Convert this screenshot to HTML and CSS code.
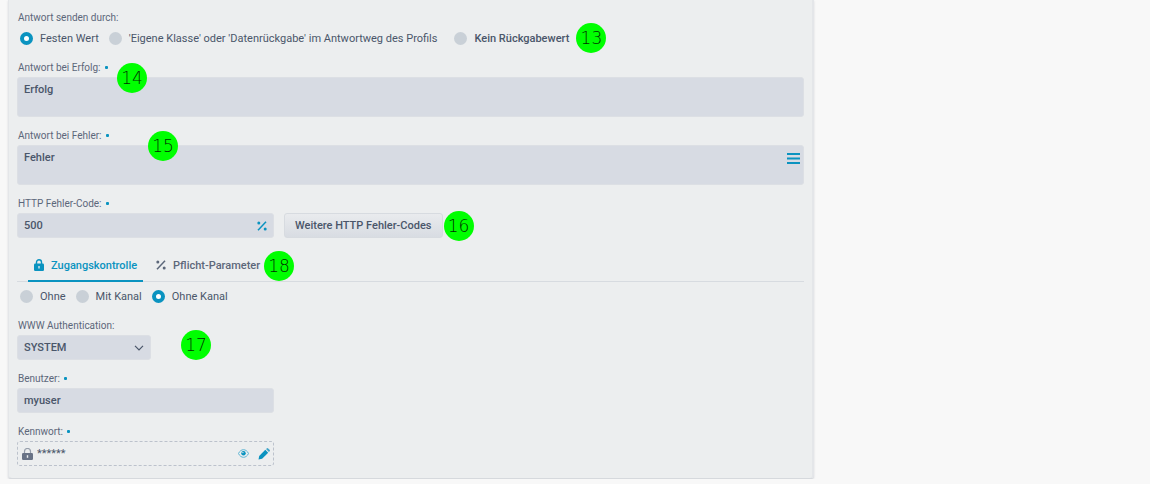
FILE: index.html
```html
<!DOCTYPE html>
<html lang="de">
  <head>
    <meta charset="UTF-8" />
    <title>HTTP Antwort</title>
    <link rel="stylesheet" href="styles.css">
  </head>
  <body>
    <form class="panel">
      <fieldset class="group">
        <legend class="label">Antwort senden durch:</legend>
        <div class="radios">
          <label><input type="radio" name="antwort" checked />Festen Wert</label>
          <label><input type="radio" name="antwort" />'Eigene Klasse' oder 'Datenrückgabe' im Antwortweg des Profils</label>
          <label class="none"><input type="radio" name="antwort" />Kein Rückgabewert</label>
          <span class="badge">13</span>
        </div>
      </fieldset>

      <div class="field">
        <label class="label required" for="erfolg">Antwort bei Erfolg:</label>
        <textarea class="box" id="erfolg">Erfolg</textarea>
        <span class="badge badge_success">14</span>
      </div>

      <div class="field">
        <label class="label required" for="fehler">Antwort bei Fehler:</label>
        <textarea class="box" id="fehler">Fehler</textarea>
        <button class="icon_btn menu" type="button" aria-label="Menü">
          <svg width="13" height="12" viewBox="0 0 13 12"><path d="M0 1h13M0 5.5h13M0 10h13" stroke="currentColor" stroke-width="1.8" /></svg>
        </button>
        <span class="badge badge_error">15</span>
      </div>

      <div class="field">
        <label class="label required" for="code">HTTP Fehler-Code:</label>
        <div class="row">
          <div class="short">
            <input class="box" id="code" type="text" value="500" />
            <button class="icon_btn percent" type="button" aria-label="Parameter">
              <svg width="10" height="10" viewBox="0 0 10 10"><path d="M1 9.2L9 .8" stroke="currentColor" stroke-width="1.5" /><circle cx="1.8" cy="2" r="1.5" fill="currentColor" /><circle cx="8.2" cy="8" r="1.5" fill="currentColor" /></svg>
            </button>
          </div>
          <button class="more" type="button">Weitere HTTP Fehler-Codes</button>
          <span class="badge badge_more">16</span>
        </div>
      </div>

      <div class="tabs">
        <button class="tab active" type="button">
          <svg width="10" height="12" viewBox="0 0 10 12"><path d="M2.5 5V3.3a2.5 2.5 0 0 1 5 0V5" fill="none" stroke="currentColor" stroke-width="1.4" /><rect y="4.6" width="10" height="7.4" rx="1.2" fill="currentColor" /><path d="M5 7v2.4" stroke="#eceeef" stroke-width="1.3" /></svg>
          Zugangskontrolle
        </button>
        <button class="tab" type="button">
          <svg width="10" height="10" viewBox="0 0 10 10"><path d="M1 9.2L9 .8" stroke="currentColor" stroke-width="1.5" /><circle cx="1.8" cy="2" r="1.5" fill="currentColor" /><circle cx="8.2" cy="8" r="1.5" fill="currentColor" /></svg>
          Pflicht-Parameter
        </button>
        <span class="badge">18</span>
      </div>

      <div class="radios access">
        <label><input type="radio" name="kanal" />Ohne</label>
        <label><input type="radio" name="kanal" />Mit Kanal</label>
        <label><input type="radio" name="kanal" checked />Ohne Kanal</label>
      </div>

      <div class="field">
        <label class="label" for="auth">WWW Authentication:</label>
        <div class="row">
          <div class="select_wrap">
            <select class="box" id="auth">
              <option>SYSTEM</option>
            </select>
            <svg class="chevron" width="10" height="6" viewBox="0 0 10 6"><path d="M1 .8L5 4.8L9 .8" fill="none" stroke="currentColor" stroke-width="1.2" /></svg>
          </div>
          <span class="badge badge_auth">17</span>
        </div>
      </div>

      <div class="field">
        <label class="label required" for="user">Benutzer:</label>
        <div class="short">
          <input class="box" id="user" type="text" value="myuser" />
        </div>
      </div>

      <div class="field">
        <label class="label required" for="pass">Kennwort:</label>
        <div class="short password">
          <svg width="11" height="12" viewBox="0 0 11 12"><path d="M2.5 5.5V3.5a3 3 0 0 1 6 0v2" fill="none" stroke="#969eab" stroke-width="1.2" /><rect y="5" width="11" height="7" rx="1.2" fill="#697386" /><path d="M5.5 7.2v2.6" stroke="#eceeef" stroke-width="1.4" /></svg>
          <input id="pass" type="text" value="******" readonly />
          <button class="icon_btn" type="button" aria-label="Anzeigen">
            <svg width="11" height="9" viewBox="0 0 11 9"><path d="M.5 4.5C2.8-.6 8.2-.6 10.5 4.5C8.2 9.6 2.8 9.6.5 4.5z" fill="none" stroke="#5eb4d3" /><circle cx="5.5" cy="4.3" r="2.2" fill="currentColor" /><circle cx="4.9" cy="3.6" r=".7" fill="#eceeef" /></svg>
          </button>
          <button class="icon_btn" type="button" aria-label="Bearbeiten">
            <svg width="12" height="12" viewBox="0 0 12 12"><path d="M.5 11.5l.7-3.6L7.3 1.8l2.9 2.9l-6.1 6.1z" fill="currentColor" /><path d="M8 1.1l.7-.7a1.1 1.1 0 0 1 1.5 0l1.4 1.4a1.1 1.1 0 0 1 0 1.5l-.7.7z" fill="#3fa4c9" /></svg>
          </button>
        </div>
      </div>
    </form>
  </body>
</html>
```
FILE: styles.css
```css
* {
  box-sizing: border-box;
}

body {
  display: grid;
  grid-template-columns: 12fr 5fr;
  align-items: start;
  margin: 0;
  padding-left: 8px;
  font-family: Roboto, sans-serif;
  font-size: 11px;
  color: #4a566a;
  background: #f8f8f8;
}

input,
textarea,
select,
button {
  font: inherit;
  color: inherit;
}

svg {
  display: block;
  flex: none;
}

.panel {
  padding: 10px 8px 12px;
  border: solid #e4e6e9;
  border-width: 0 2px 1px 1px;
  border-bottom-color: #d6d9dd;
  border-radius: 0 0 4px 4px;
  background: #eceeef;
  box-shadow: 0 1px 2px rgba(60, 70, 90, 0.2);
}

.group {
  margin: 0;
  padding: 0;
  border: 0;
}

.label {
  display: block;
  margin-bottom: 1px;
  padding: 0 1px;
  font-size: 10px;
  line-height: 16px;
  color: #5c677a;
}

.required::after {
  content: '';
  display: inline-block;
  width: 3px;
  height: 3px;
  margin-left: 4px;
  border-radius: 1px;
  vertical-align: 2px;
  background: #0a93c0;
}

.radios {
  display: flex;
  align-items: center;
  height: 22px;
}

.radios label {
  display: flex;
  align-items: center;
  gap: 7px;
  margin-left: 3px;
  margin-right: 7px;
}

.radios .none {
  margin-left: 10px;
  font-weight: 500;
}

.radios input {
  appearance: none;
  flex: none;
  width: 13px;
  height: 13px;
  margin: 0;
  border-radius: 50%;
  background: #c9d0d7;
}

.radios input:checked {
  border: 4px solid #0a93c0;
  background: #fff;
}

.access {
  margin-top: 3px;
}

.field {
  position: relative;
  margin-top: 11px;
}

.box {
  display: block;
  width: 100%;
  height: 25px;
  padding: 0 6px;
  border: 1px solid #dcdfe4;
  border-radius: 3px;
  outline: none;
  font-weight: 500;
  background: #d7dbe3;
}

textarea.box {
  height: 40px;
  padding-top: 4px;
  line-height: 16px;
  resize: none;
}

.row {
  display: flex;
  align-items: center;
}

.short {
  position: relative;
  width: 257px;
}

.icon_btn {
  padding: 0;
  border: 0;
  color: #0a93c0;
  background: none;
  cursor: pointer;
}

.menu {
  position: absolute;
  top: 25px;
  right: 4px;
}

.percent {
  position: absolute;
  top: 8px;
  right: 7px;
}

.more {
  height: 25px;
  margin-left: 10px;
  padding: 0 10px;
  border: 1px solid #d7dbe0;
  border-radius: 3px;
  font-weight: 500;
  background: linear-gradient(#e9ebee, #d8dce2);
}

.badge {
  flex: none;
  width: 30px;
  height: 30px;
  margin: -4px 0;
  border-radius: 50%;
  font-family: 'DejaVu Sans', sans-serif;
  font-size: 17px;
  font-weight: 200;
  line-height: 30px;
  text-align: center;
  color: #003000;
  background: #0f0;
}

.badge_success {
  position: absolute;
  top: 7px;
  left: 100px;
}

.badge_error {
  position: absolute;
  top: 7px;
  left: 131px;
}

.badge_more {
  margin-left: 1px;
}

.badge_auth {
  align-self: flex-end;
  margin: -8px 0 0 30px;
}

.tabs {
  display: flex;
  align-items: center;
  height: 31px;
  margin-top: 13px;
  padding-left: 11px;
  border-bottom: 1px solid #d7dbe0;
}

.tab {
  display: flex;
  align-items: center;
  gap: 7px;
  height: 31px;
  padding: 0 6px;
  border: 0;
  border-bottom: 2px solid transparent;
  font-weight: 500;
  color: #5c677a;
  background: none;
}

.tab + .tab {
  padding: 0 4px 0 13px;
}

.tab.active {
  border-color: #0a93c0;
  color: #0a93c0;
}

.select_wrap {
  position: relative;
  width: 134px;
}

select.box {
  appearance: none;
}

.chevron {
  position: absolute;
  top: 10px;
  right: 7px;
  pointer-events: none;
}

.password {
  display: flex;
  align-items: center;
  gap: 9px;
  height: 25px;
  padding: 0 3px 0 4px;
  border: 1px dashed #bcc2cc;
  border-radius: 3px;
}

.password input {
  flex: 1;
  min-width: 0;
  margin-left: -5px;
  padding: 0;
  border: 0;
  outline: none;
  background: none;
}
```
